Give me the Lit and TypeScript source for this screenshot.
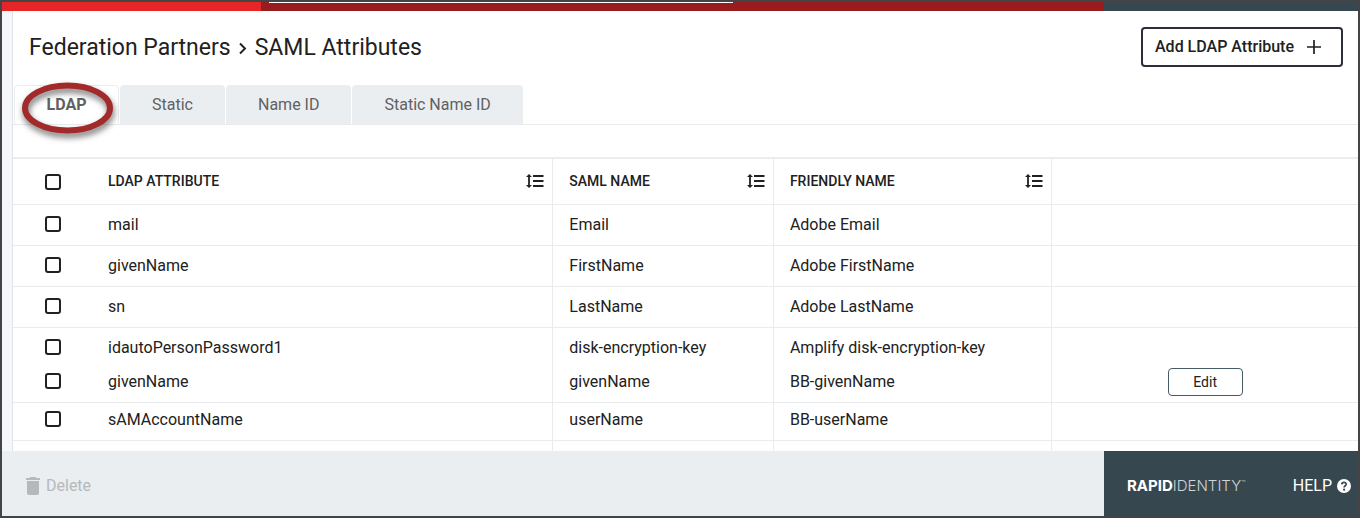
import { LitElement, html, css, svg, nothing } from "lit";
import { customElement, property, state } from "lit/decorators.js";
import { classMap } from "lit/directives/class-map.js";

interface Attribute {
  ldap: string;
  saml: string;
  friendly: string;
  density?: "tight" | "compact";
  editable?: boolean;
}

const TABS = ["LDAP", "Static", "Name ID", "Static Name ID"];

const ROWS: Attribute[] = [
  { ldap: "mail", saml: "Email", friendly: "Adobe Email" },
  { ldap: "givenName", saml: "FirstName", friendly: "Adobe FirstName" },
  { ldap: "sn", saml: "LastName", friendly: "Adobe LastName" },
  {
    ldap: "idautoPersonPassword1",
    saml: "disk-encryption-key",
    friendly: "Amplify disk-encryption-key",
    density: "tight",
  },
  { ldap: "givenName", saml: "givenName", friendly: "BB-givenName", editable: true },
  { ldap: "sAMAccountName", saml: "userName", friendly: "BB-userName", density: "compact" },
];

const sortIcon = html`<svg width="18" height="14" viewBox="0 0 18 14" aria-hidden="true">
  ${svg`<path d="M3 0 6 3H3.900V11H6L3 14 0 11H2.100V3H0Z" fill="#212121"/>
  <path d="M7 2H17.500M7 7H17.500M7 12H17.500" stroke="#212121" stroke-width="2"/>`}
</svg>`;

@customElement("attribute-table")
export class AttributeTable extends LitElement {
  @property({ attribute: false }) rows: Attribute[] = [];

  static styles = css`
    :host {
      display: flex;
      flex-direction: column;
    }
    .table {
      flex: 1;
      width: 100%;
      table-layout: fixed;
      border-collapse: separate;
      border-spacing: 0;
      border-top: 2px solid #e9edf0;
      color: #212121;
      font-size: 16px;
      line-height: 24px;
    }
    .pick {
      width: 79px;
    }
    .ldap {
      width: 34.3%;
    }
    .saml {
      width: 16.4%;
    }
    .friendly {
      width: 20.7%;
    }
    th,
    td {
      box-sizing: border-box;
      text-align: left;
      padding: 0 16px;
      border-bottom: 1px solid #e9ebed;
    }
    .ruled {
      border-right: 1px solid #e9ecef;
    }
    th {
      height: 46px;
      font-size: 14px;
      font-weight: 500;
    }
    .heading {
      display: flex;
      align-items: center;
      justify-content: space-between;
      margin-right: -8px;
      padding-bottom: 2px;
    }
    .sort {
      display: flex;
      padding: 0;
      border: 0;
      background: none;
    }
    td {
      height: 41px;
      padding-top: 8px;
      vertical-align: top;
      font-weight: 400;
    }
    .tight td {
      height: 34px;
      border-bottom: 0;
    }
    .compact td {
      height: 38px;
      padding-top: 5px;
    }
    .filler td {
      height: auto;
      padding: 0;
      border-bottom: 0;
    }
    .box-cell {
      padding-left: 32px;
    }
    .box {
      appearance: none;
      display: block;
      box-sizing: border-box;
      width: 16px;
      height: 16px;
      margin: 3px 0;
      border: 2px solid #212121;
      border-radius: 3px;
      background: #fff;
    }
    .box:checked {
      background: #212121;
    }
    .actions {
      text-align: center;
    }
    .edit {
      display: block;
      box-sizing: border-box;
      width: 75px;
      height: 28px;
      margin: -2px auto;
      border: 1px solid #455a64;
      border-radius: 4px;
      background: #fff;
      color: #212121;
      font: 400 14px/20px Roboto, sans-serif;
    }
  `;

  private heading(label: string, size: string) {
    return html`<th class="ruled ${size}" scope="col">
      <div class="heading">
        ${label}<button class="sort" aria-label="Sort by ${label}">${sortIcon}</button>
      </div>
    </th>`;
  }

  render() {
    return html`<table class="table">
      <thead>
        <tr>
          <th class="pick box-cell" scope="col">
            <input class="box" type="checkbox" aria-label="Select all" />
          </th>
          ${this.heading("LDAP ATTRIBUTE", "ldap")} ${this.heading("SAML NAME", "saml")}
          ${this.heading("FRIENDLY NAME", "friendly")}
          <th></th>
        </tr>
      </thead>
      <tbody>
        ${this.rows.map(
          (row) => html`<tr
            class=${classMap({ tight: row.density === "tight", compact: row.density === "compact" })}
          >
            <td class="box-cell">
              <input class="box" type="checkbox" aria-label="Select ${row.ldap}" />
            </td>
            <td class="ruled">${row.ldap}</td>
            <td class="ruled">${row.saml}</td>
            <td class="ruled">${row.friendly}</td>
            <td class="actions">
              ${row.editable ? html`<button class="edit">Edit</button>` : nothing}
            </td>
          </tr>`
        )}
        <tr class="filler" aria-hidden="true">
          <td></td>
          <td class="ruled"></td>
          <td class="ruled"></td>
          <td class="ruled"></td>
          <td></td>
        </tr>
      </tbody>
    </table>`;
  }
}

@customElement("app-root")
export class AppRoot extends LitElement {
  @state() private tab = TABS[0];

  static styles = css`
    :host {
      display: flex;
      flex-direction: column;
      box-sizing: border-box;
      height: 100vh;
      border: 2px solid #444447;
      background: #fff;
      color: #212121;
      font-family: Roboto, sans-serif;
      font-size: 16px;
      line-height: 24px;
    }
    .strip {
      display: flex;
      flex: none;
      height: 9px;
      background: #981b1e;
    }
    .brand {
      width: 259px;
      background: #e62527;
    }
    .nav {
      flex: 1;
      padding-left: 8px;
    }
    .indicator {
      width: 464px;
      height: 1px;
      background: #fff;
    }
    .account {
      width: 254px;
      background: #37474f;
    }
    .main {
      display: flex;
      flex-direction: column;
      flex: 1;
      min-height: 0;
      overflow: hidden;
      border-left: 10px solid #f6f7fa;
    }
    .panel {
      display: flex;
      flex-direction: column;
      flex: 1;
      border-left: 1px solid #e0e4e7;
    }
    .header {
      display: flex;
      align-items: center;
      justify-content: space-between;
      padding: 16px 15px 18px 16px;
    }
    .title {
      display: flex;
      align-items: center;
      gap: 8px;
      margin: 0;
      padding-top: 2px;
      font-size: 23px;
      line-height: 32px;
      font-weight: 400;
    }
    .add {
      display: flex;
      align-items: center;
      gap: 13px;
      height: 40px;
      padding: 0 20px 0 12px;
      border: 2px solid #2b3038;
      border-radius: 4px;
      background: #fff;
      color: #212121;
      font: 500 16px/24px Roboto, sans-serif;
    }
    .tabs {
      display: flex;
      gap: 1px;
      padding-left: 1px;
      border-bottom: 1px solid #e9ebed;
    }
    .tab {
      position: relative;
      min-width: 105px;
      height: 39px;
      padding: 0 31px;
      border: 1px solid #eaeef1;
      border-bottom: 0;
      border-radius: 4px 4px 0 0;
      background: #eaeef1;
      color: #616161;
      font: 400 16px/24px Roboto, sans-serif;
    }
    .active {
      background: #fff;
      font-weight: 700;
    }
    .marker {
      position: absolute;
      left: 1px;
      top: -9px;
      overflow: visible;
      filter: drop-shadow(1px 4px 3px rgba(0, 0, 0, 0.55));
      pointer-events: none;
    }
    .list {
      flex: 1;
      margin-top: 32px;
    }
    .footer {
      display: flex;
      flex: none;
      height: 65px;
      background: #eaeef1;
    }
    .tools {
      display: flex;
      flex: 1;
      align-items: center;
      padding: 4px 24px 0;
    }
    .delete {
      display: flex;
      align-items: center;
      gap: 6px;
      padding: 0;
      border: 0;
      background: none;
      color: #b5b9bb;
      font: 400 16px/24px Roboto, sans-serif;
    }
    .about {
      display: flex;
      align-items: center;
      justify-content: space-between;
      box-sizing: border-box;
      width: 254px;
      padding: 4px 7px 0 23px;
      background: #37474f;
      color: #fff;
    }
    .logo {
      font: 300 15px/20px Inter, sans-serif;
      color: #cfd5d8;
    }
    .logo b {
      font-weight: 700;
      color: #fff;
    }
    .logo sup {
      font-size: 7px;
      line-height: 7px;
      vertical-align: 5px;
    }
    .help {
      display: flex;
      align-items: center;
      gap: 5px;
      color: #fff;
      text-decoration: none;
    }
  `;

  render() {
    return html`
      <div class="strip">
        <div class="brand"></div>
        <div class="nav"><div class="indicator"></div></div>
        <div class="account"></div>
      </div>
      <main class="main">
        <div class="panel">
          <header class="header">
            <h1 class="title">
              <span>Federation Partners</span>
              <svg width="8" height="14" viewBox="0 0 8 14" aria-hidden="true">
                <path d="M1 2.500 6 7.500 1 12.500" fill="none" stroke="#212121" stroke-width="1.900" />
              </svg>
              <span>SAML Attributes</span>
            </h1>
            <button class="add">
              Add LDAP Attribute
              <svg width="14" height="14" viewBox="0 0 14 14" aria-hidden="true">
                <path d="M0 7H14M7 0V14" stroke="#212121" stroke-width="1.700" />
              </svg>
            </button>
          </header>
          <div class="tabs" role="tablist">
            ${TABS.map(
              (name) => html`<button
                class=${classMap({ tab: true, active: name === this.tab })}
                role="tab"
                aria-selected=${name === this.tab}
                @click=${() => (this.tab = name)}
              >
                ${name}${name === TABS[0]
                  ? html`<svg class="marker" width="102" height="62" viewBox="-5 -5 102 62" aria-hidden="true">
                      <ellipse cx="46.500" cy="26" rx="42.500" ry="22.500" fill="none" stroke="#a32a2a" stroke-width="6" />
                    </svg>`
                  : nothing}
              </button>`
            )}
          </div>
          <attribute-table class="list" .rows=${ROWS}></attribute-table>
        </div>
      </main>
      <footer class="footer">
        <div class="tools">
          <button class="delete" disabled>
            <svg width="14" height="18" viewBox="0 0 14 18" aria-hidden="true">
              <path d="M0 1H3.500L4.500 0H9.500L10.500 1H14V3H0ZM1 4H13V16A2 2 0 0 1 11 18H3A2 2 0 0 1 1 16Z" fill="#b5b9bb" />
            </svg>
            Delete
          </button>
        </div>
        <div class="about">
          <span class="logo"><b>RAPID</b>IDENTITY<sup>™</sup></span>
          <a class="help" href="#help">
            HELP
            <svg width="14" height="14" viewBox="0 0 14 14" aria-hidden="true">
              <circle cx="7" cy="7" r="7" fill="#fff" />
              <path d="M4.800 5.400C4.900 2.700 9.300 2.800 9.200 5.300C9.100 6.800 7.100 6.700 7.100 8.600" fill="none" stroke="#37474f" stroke-width="1.700" />
              <circle cx="7.100" cy="10.700" r="1.100" fill="#37474f" />
            </svg>
          </a>
        </div>
      </footer>
    `;
  }
}
